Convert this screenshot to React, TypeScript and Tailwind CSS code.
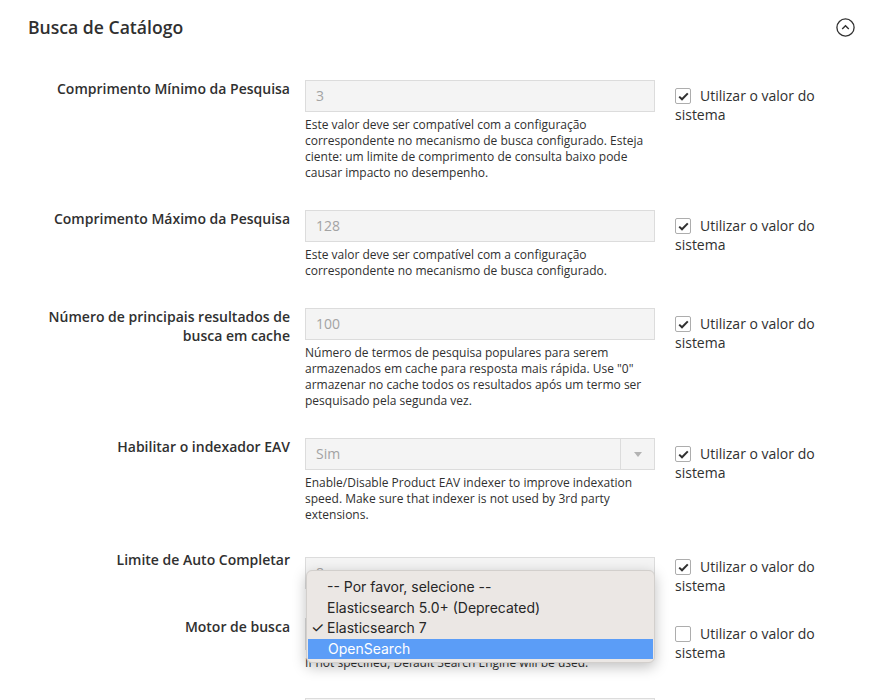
import { ReactNode } from "react";

type Field = {
  label: string;
  value: string;
  note?: ReactNode;
  checked: boolean;
  select?: boolean;
  pad: string;
  shift?: string;
  menu?: boolean;
};

const fields: Field[] = [
  {
    label: "Comprimento Mínimo da Pesquisa",
    value: "3",
    note: "Este valor deve ser compatível com a configuração correspondente no mecanismo de busca configurado. Esteja ciente: um limite de comprimento de consulta baixo pode causar impacto no desempenho.",
    checked: true,
    pad: "pb-[29px]",
  },
  {
    label: "Comprimento Máximo da Pesquisa",
    value: "128",
    note: "Este valor deve ser compatível com a configuração correspondente no mecanismo de busca configurado.",
    checked: true,
    pad: "pb-[29px]",
  },
  {
    label: "Número de principais resultados de busca em cache",
    value: "100",
    note: 'Número de termos de pesquisa populares para serem armazenados em cache para resposta mais rápida. Use "0" armazenar no cache todos os resultados após um termo ser pesquisado pela segunda vez.',
    checked: true,
    pad: "pb-[29px]",
  },
  {
    label: "Habilitar o indexador EAV",
    value: "Sim",
    select: true,
    note: "Enable/Disable Product EAV indexer to improve indexation speed. Make sure that indexer is not used by 3rd party extensions.",
    checked: true,
    pad: "pb-[28px]",
  },
  {
    label: "Limite de Auto Completar",
    value: "8",
    checked: true,
    pad: "pb-[23px]",
    shift: "mt-[6px]",
  },
  {
    label: "Motor de busca",
    value: "Elasticsearch 7",
    select: true,
    note: "If not specified, Default Search Engine will be used.",
    checked: false,
    pad: "pb-[27px]",
    menu: true,
  },
  {
    label: "",
    value: "",
    checked: true,
    pad: "pb-[20px]",
  },
];

const options = [
  "-- Por favor, selecione --",
  "Elasticsearch 5.0+ (Deprecated)",
  "Elasticsearch 7",
  "OpenSearch",
];

function Checkbox({ checked }: { checked: boolean }) {
  return (
    <span className="relative top-[2px] inline-flex align-top mr-[9px] w-[16px] h-[16px] rounded-[2px] border border-[#adadad] bg-white items-center justify-center">
      {checked && (
        <svg width="11" height="9" viewBox="0 0 11 9">
          <path d="M1.2 4.6 L4 7.3 L9.8 1.4" fill="none" stroke="#303030" strokeWidth="2" />
        </svg>
      )}
    </span>
  );
}

function Menu() {
  return (
    <div className="absolute left-[1px] -top-[48px] w-[349px] pt-[6px] pb-[3px] rounded-[6px] bg-[#ebe7e4] border border-[#d2cfcc] shadow-[0_4px_14px_rgba(0,0,0,0.25)] font-['Inter'] text-[14px] text-[#262626] z-10">
      {options.map((o) => (
        <div
          key={o}
          className={`relative h-[20.5px] leading-[20.5px] pl-[20px] ${
            o === "OpenSearch" ? "bg-[#5b9df7] text-white mx-[1px] pl-[19px]" : ""
          }`}
        >
          {o === "Elasticsearch 7" && (
            <span className="absolute left-[4px] top-0 text-[15px]">✓</span>
          )}
          {o}
        </div>
      ))}
    </div>
  );
}

function Row({ f }: { f: Field }) {
  return (
    <div className={`flex items-start ${f.pad}`}>
      <div className="w-[262px] -mt-[1px] text-right text-[14px] leading-[19px] font-semibold text-[#303030]">
        {f.label}
      </div>
      <div className={`relative w-[350px] ml-[15px] ${f.shift ?? ""}`}>
        <div className="flex h-[32px] border border-[#dcdcdc] bg-[#f4f4f4] text-[14px] text-[#a3a3a3]">
          <div className="flex-1 pl-[10px] leading-[30px]">{f.value}</div>
          {f.select && (
            <div className="w-[34px] border-l border-[#dcdcdc] flex items-center justify-center">
              <svg width="8" height="5" viewBox="0 0 8 5">
                <path d="M0 0 H8 L4 5 Z" fill="#b3b3b3" />
              </svg>
            </div>
          )}
        </div>
        {f.note && (
          <p className="mt-[5px] text-[12px] leading-[16px] text-[#303030]">{f.note}</p>
        )}
        {f.menu && <Menu />}
      </div>
      <div className="w-[160px] ml-[20px] mt-[6px] text-[14px] leading-[19px] text-[#303030]">
        <Checkbox checked={f.checked} />
        Utilizar o valor do sistema
      </div>
    </div>
  );
}

export default function App() {
  return (
    <div className="w-[874px] h-[700px] overflow-hidden bg-white font-['Open_Sans'] text-[#303030]">
      <div className="flex items-center justify-between pl-[28px] pr-[19px] pt-[15px]">
        <h2 className="text-[17.6px] leading-[24px] font-semibold text-[#303030]">
          Busca de Catálogo
        </h2>
        <svg width="19" height="19" viewBox="0 0 19 19">
          <circle cx="9.5" cy="9.5" r="8.6" fill="none" stroke="#303030" strokeWidth="1.3" />
          <path d="M6.2 11 L9.5 7.7 L12.8 11" fill="none" stroke="#303030" strokeWidth="1.4" />
        </svg>
      </div>
      <div className="pl-[28px] mt-[41px]">
        {fields.map((f, i) => (
          <Row key={i} f={f} />
        ))}
      </div>
    </div>
  );
}
